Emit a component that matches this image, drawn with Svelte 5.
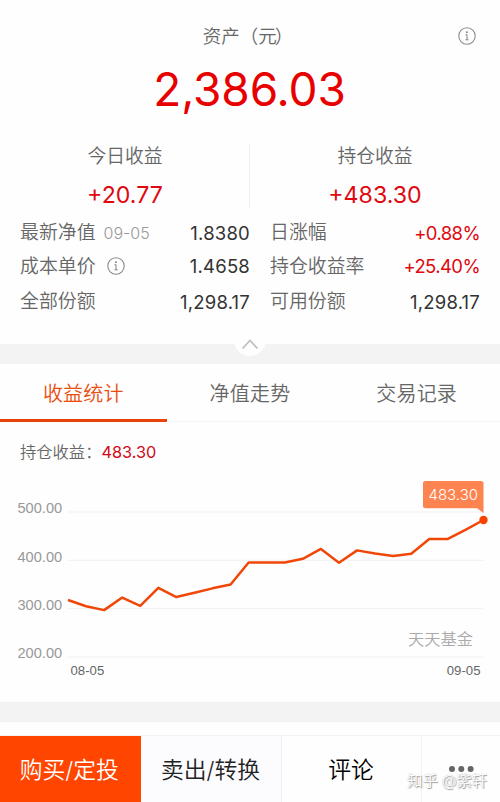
<script>
  let activeTab = "profit";

  const tabs = [
    { id: "profit", label: "收益统计" },
    { id: "trend", label: "净值走势" },
    { id: "records", label: "交易记录" },
  ];

  const details = [
    { label: "最新净值", date: "09-05", value: "1.8380" },
    { label: "日涨幅", value: "+0.88%", up: true },
    { label: "成本单价", info: true, value: "1.4658" },
    { label: "持仓收益率", value: "+25.40%", up: true },
    { label: "全部份额", value: "1,298.17" },
    { label: "可用份额", value: "1,298.17" },
  ];

  const history = [
    318, 305, 297, 323, 305.5, 343, 324, 333, 342, 350, 395.5, 395.5, 395.5,
    403, 423.5, 395, 420.5, 414, 409, 413.5, 444, 444, 463, 483.3,
  ];
  const levels = [500, 400, 300, 200];

  // Plot area inside the chart
  const left = 68;
  const right = 483.5;
  const bottom = 173;
  const unit = 0.4835;

  const toX = (i) => left + (i * (right - left)) / (history.length - 1);
  const toY = (value) => bottom - (value - 200) * unit;

  const points = history.map((value, i) => `${toX(i)},${toY(value)}`).join(" ");
  const last = history.length - 1;
</script>

{#snippet infoIcon()}
  <svg class="info" width="18" height="18" viewBox="0 0 18 18">
    <circle cx="9" cy="9" r="8.2" fill="none" stroke="#8a8a8a" stroke-width="1.1" />
    <circle cx="8.9" cy="5.2" r="0.9" fill="#777" />
    <path d="M7.6 7.7H9V12.7M7.5 12.8H10.6" fill="none" stroke="#808080" stroke-width="1" />
  </svg>
{/snippet}

<div class="page">
  <section class="summary">
    <div class="title">
      <span>资产（<span class="currency">元</span>）</span>
      <div class="title-info">{@render infoIcon()}</div>
    </div>
    <div class="total">2,386.03</div>

    <div class="gains">
      <div class="gain">
        <div class="gain-label">今日收益</div>
        <div class="gain-value">+20.77</div>
      </div>
      <div class="gain">
        <div class="gain-label">持仓收益</div>
        <div class="gain-value">+483.30</div>
      </div>
    </div>

    <div class="details">
      {#each details as item}
        <div class="detail">
          <span class="detail-label">{item.label}</span>
          {#if item.date}<span class="date">{item.date}</span>{/if}
          {#if item.info}{@render infoIcon()}{/if}
          <span class="detail-value" class:up={item.up}>{item.value}</span>
        </div>
      {/each}
    </div>
  </section>

  <div class="gap">
    <div class="collapse">
      <svg width="32" height="24" viewBox="0 0 32 24">
        <path d="M8.5 16.5L16 8.5L23.5 16.5" fill="none" stroke="#bfbfbf" stroke-width="1.7" />
      </svg>
    </div>
  </div>

  <div class="tabs">
    {#each tabs as tab}
      <button
        class="tab"
        class:active={activeTab === tab.id}
        on:click={() => (activeTab = tab.id)}
      >
        {tab.label}
      </button>
    {/each}
  </div>

  <section class="stats">
    <div class="holding">
      <span>持仓收益：</span><span class="holding-value">483.30</span>
    </div>
    <svg class="chart" width="500" height="218" viewBox="0 0 500 218">
      {#each levels as level}
        <line x1={left} x2={right} y1={toY(level)} y2={toY(level)} stroke="#f0f0f0" />
        <text class="axis" x="17.5" y={toY(level) + 1.2}>{level}.00</text>
      {/each}
      <text class="day" x="70.5" y="191">08-05</text>
      <text class="day" x="480.5" y="191" text-anchor="end">09-05</text>
      <text class="brand" x="408" y="161.3">天天基金</text>
      <polyline {points} fill="none" stroke="#f04708" stroke-width="2.5" stroke-linejoin="round" />
      <circle cx={toX(last)} cy={toY(history[last])} r="4.2" fill="#f84400" />
      <path
        d="M425.5-3H481Q483.5-3 483.5-.5V29L477 24.2H425.5Q423 24.2 423 21.7V-.5Q423-3 425.5-3Z"
        fill="#fd8450"
      />
      <text class="tip" x="453.3" y="16" text-anchor="middle">483.30</text>
    </svg>
  </section>

  <div class="gap lower"></div>

  <div class="actions">
    <button class="action buy">购买/定投</button>
    <button class="action sell">卖出/转换</button>
    <button class="action comment">评论</button>
    <button class="action more">
      <svg width="26" height="8" viewBox="0 0 26 8">
        <circle cx="4" cy="4" r="3" />
        <circle cx="13.3" cy="4" r="3" />
        <circle cx="22.6" cy="4" r="3" />
      </svg>
    </button>
    <div class="watermark">知乎 @紫轩</div>
  </div>
</div>

<style>
  :global(body) {
    margin: 0;
    background: #fff;
  }

  .page {
    width: 500px;
    height: 802px;
    display: flex;
    flex-direction: column;
    overflow: hidden;
    background: #fefefe;
    color: #666;
    font-family: Inter, "Noto Sans CJK SC", sans-serif;
    font-weight: 350;
  }

  button {
    border: 0;
    padding: 0;
    background: none;
    font: inherit;
    cursor: pointer;
  }

  .info {
    display: block;
  }

  .summary {
    height: 344px;
    box-sizing: border-box;
    flex-shrink: 0;
    padding-top: 22px;
  }

  .title {
    position: relative;
    height: 28px;
    line-height: 29px;
    font-size: 18.5px;
    text-align: center;
    text-indent: -4px;
  }

  .currency {
    letter-spacing: -2px;
  }

  .title-info {
    position: absolute;
    top: 5px;
    right: 24.5px;
  }

  .total {
    height: 80px;
    line-height: 78px;
    color: #e80000;
    font-size: 46px;
    font-weight: 400;
    letter-spacing: -0.1px;
    text-align: center;
    text-indent: -1px;
  }

  .gains {
    display: flex;
    height: 64px;
    margin-top: 14px;
  }

  .gain {
    flex: 1;
    text-align: center;
  }

  .gain + .gain {
    box-shadow: -1px 0 #eee;
  }

  .gain-label {
    height: 24px;
    line-height: 25px;
    font-size: 18.8px;
  }

  .gain-value {
    height: 40px;
    margin-top: 6px;
    line-height: 42px;
    color: #df0910;
    font-size: 23.2px;
    font-weight: 400;
  }

  .details {
    display: grid;
    grid-template-columns: 230px 210px;
    grid-template-rows: 33px 34px 37px;
    column-gap: 20px;
    margin: 8px 20px 0;
    align-items: center;
  }

  .detail {
    display: flex;
    align-items: center;
    height: 32px;
    line-height: 32px;
    font-size: 18.9px;
  }

  .detail-label {
    padding-top: 1px;
  }

  .date {
    margin-left: 8px;
    color: #999;
    font-size: 16px;
  }

  .detail .info {
    margin-left: 11px;
  }

  .detail-value {
    margin-left: auto;
    color: #333;
    font-size: 18.5px;
    font-weight: 400;
    letter-spacing: 0.2px;
  }

  .detail-value.up {
    color: #df0910;
    letter-spacing: -0.6px;
  }

  .gap {
    position: relative;
    height: 20px;
    flex-shrink: 0;
    background: #f3f3f3;
  }

  .collapse {
    position: absolute;
    left: 234px;
    top: -12px;
    width: 32px;
    height: 24px;
    border-radius: 0 0 16px 16px;
    background: #fefefe;
  }

  .collapse svg {
    display: block;
  }

  .tabs {
    display: flex;
    height: 58px;
    box-sizing: border-box;
    flex-shrink: 0;
    border-bottom: 1px solid #f6f6f6;
  }

  .tab {
    flex: 1;
    height: 58px;
    box-sizing: border-box;
    padding-top: 1px;
    border-bottom: 3px solid transparent;
    color: #666;
    font-size: 20px;
    letter-spacing: 0.2px;
  }

  .tab.active {
    border-color: #ea4308;
    color: #ea4d0d;
  }

  .stats {
    height: 280px;
    flex-shrink: 0;
  }

  .holding {
    display: flex;
    height: 62px;
    padding-left: 20px;
    line-height: 60px;
    font-size: 16.3px;
  }

  .holding-value {
    color: #d20818;
    font-weight: 400;
  }

  .chart {
    display: block;
    overflow: visible;
  }

  .axis,
  .day {
    font-family: "Liberation Sans", Arial, sans-serif;
    font-weight: 400;
  }

  .axis {
    fill: #999;
    font-size: 14.6px;
  }

  .day {
    fill: #666;
    font-size: 13.2px;
  }

  .brand {
    fill: #aaa;
    font-size: 16.3px;
  }

  .tip {
    fill: #fff;
    font-size: 15px;
  }

  .lower {
    margin-bottom: 13px;
  }

  .actions {
    position: relative;
    display: grid;
    grid-template-columns: 140.5px 141px 140px 1fr;
    height: 67px;
    flex-shrink: 0;
    border-top: 1px solid #f2f2f2;
  }

  .action {
    height: 67px;
    padding-bottom: 2px;
    color: #222;
    font-size: 22.8px;
  }

  .action + .action:not(.more) {
    border-right: 1px solid #f2f2f4;
  }

  .buy {
    padding-right: 2px;
    background: #ff4500;
    color: #fff;
  }

  .sell {
    background: #fcfcfe;
  }

  .comment {
    color: #000;
  }

  .more svg {
    display: block;
    margin: 0 auto;
    fill: #666;
  }

  .watermark {
    position: absolute;
    right: 13px;
    top: 33px;
    color: #fff;
    font-size: 15.2px;
    line-height: 24px;
    text-shadow: 0 0 1px #aaa, 1px 1px 1px #999;
  }
</style>
